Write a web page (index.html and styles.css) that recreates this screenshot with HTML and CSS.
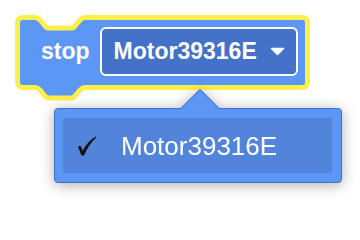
FILE: index.html
```html
<!DOCTYPE html>
<html>
<head>
<meta charset="utf-8">
<link rel="stylesheet" href="styles.css">
</head>
<body>
<div class="stage">
  <div class="block">
    <svg class="block-shape" width="295" height="90" viewBox="0 0 295 90">
      <path d="M 2.5 7.5 A 5 5 0 0 1 7.5 2.5 H 20 C 22.5 2.5 23.5 3.5 25 5 L 30 11 C 31 12.5 32 13 34 13 H 56 C 58 13 59 12.5 60 11 L 65 5 C 66.5 3.5 67.5 2.5 70 2.5 H 287.5 A 5 5 0 0 1 292.5 7.5 V 67.5 A 5 5 0 0 1 287.5 72.5 H 70 C 67.5 72.5 66.5 73.5 65 75 L 60 81 C 59 82.5 58 83 56 83 H 34 C 32 83 31 82.5 30 81 L 25 75 C 23.5 73.5 22.5 72.5 20 72.5 H 7.5 A 5 5 0 0 1 2.5 67.5 Z"/>
    </svg>
    <span class="label">stop</span>
    <div class="field">
      <span class="field-text">Motor39316E</span>
      <svg class="caret" width="15" height="9" viewBox="0 0 15 9"><path d="M1.5 1.5 H13.5 L7.5 7.5 Z"/></svg>
    </div>
  </div>
  <div class="menu">
    <div class="menu-arrow"><div class="menu-arrow-sq"></div></div>
    <div class="menu-item selected">
      <svg class="check" width="20" height="20" viewBox="0 0 20 20"><path d="M0.8 11 C2.4 9.4 4 9.9 4.9 12.4 L5.8 14.8 C8.4 9.4 12.4 4.4 18.8 0.5 L19.3 1.4 C14 6 10 12 7.4 18.9 L5.4 19.7 C4.3 19.7 3.6 17.4 2.7 14.9 C2 13.1 1.5 11.9 0.8 11 Z"/></svg>
      <span class="item-text">Motor39316E</span>
    </div>
  </div>
</div>
</body>
</html>
```
FILE: styles.css
```css
html, body {
  margin: 0;
  padding: 0;
  background: #ffffff;
}
.stage {
  position: relative;
  width: 360px;
  height: 204px;
  overflow: hidden;
  font-family: "Liberation Sans", Arial, Helvetica, sans-serif;
}
.block {
  position: relative;
  display: flex;
  align-items: center;
  box-sizing: border-box;
  width: 295px;
  height: 73px;
  margin: 15px 0 0 15px;
  padding: 0 12px 0 26px;
  gap: 10px;
}
.block-shape {
  position: absolute;
  left: 0;
  top: 0;
  overflow: visible;
}
.block-shape path {
  fill: #5c97f6;
  stroke: #ffef4a;
  stroke-width: 5;
  stroke-linejoin: round;
}
.label {
  position: relative;
  color: #ffffff;
  font-weight: bold;
  font-size: 23px;
  line-height: 1;
}
.field {
  position: relative;
  flex: 1;
  display: flex;
  align-items: center;
  box-sizing: border-box;
  height: 49px;
  border: 2px solid #ffffff;
  border-radius: 6px;
  background: #4472c9;
  padding: 0 11px 0 12px;
  gap: 13px;
}
.field-text {
  color: #ffffff;
  font-weight: bold;
  font-size: 23px;
  line-height: 1;
}
.caret path {
  fill: #ffffff;
  stroke: #ffffff;
  stroke-width: 1.5;
  stroke-linejoin: round;
}
.menu {
  position: absolute;
  left: 54px;
  top: 108px;
  width: 288px;
  height: 75px;
  box-sizing: border-box;
  background: #5c97f6;
  border: 1px solid #4070cc;
  border-radius: 4px;
  padding: 9px 9px 9px 8px;
  filter: drop-shadow(0 2px 7px rgba(0, 0, 0, 0.32));
}
.menu-arrow {
  position: absolute;
  left: 123px;
  top: -22px;
  width: 44px;
  height: 22px;
  overflow: hidden;
}
.menu-arrow-sq {
  position: absolute;
  left: 8px;
  top: 7px;
  width: 28px;
  height: 28px;
  box-sizing: border-box;
  background: #5c97f6;
  border-top: 1px solid #4070cc;
  border-left: 1px solid #4070cc;
  border-top-left-radius: 4px;
  transform: rotate(45deg);
}
.menu-item {
  display: flex;
  align-items: center;
  height: 55px;
  box-sizing: border-box;
  padding-left: 14px;
  gap: 24px;
}
.menu-item.selected {
  background: #5284dc;
}
.check path {
  fill: #111111;
}
.item-text {
  color: #ffffff;
  font-size: 26px;
  line-height: 1;
}
```
